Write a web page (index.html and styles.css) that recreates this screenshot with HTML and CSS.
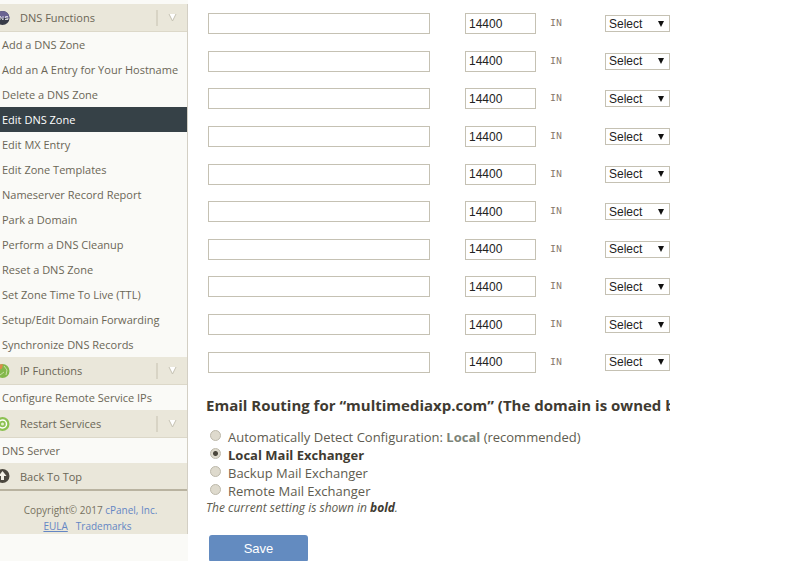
FILE: index.html
```html
<!DOCTYPE html>
<html lang="en">
<head>
  <meta charset="UTF-8" />
  <meta name="viewport" content="width=device-width, initial-scale=1.0"/>
  <title>Edit DNS Zone</title>
  <link rel="stylesheet" href="styles.css">
</head>
<body>
  <aside class="sidebar">
    <nav>
      <div class="nav-header">
        <svg class="nav-icon" width="10" height="16" viewBox="0 0 10 16">
          <circle cx="2.5" cy="8" r="7" fill="#373b48"/>
          <path d="M-4.5 8a7 7 0 0 1 14 0z" fill="#6a6492"/>
          <path d="M0 10V6l3 4V6M8 6.500H5.500V8H8v1.500H5" fill="none" stroke="#d4d3dc" stroke-width="1"/>
        </svg>
        <span>DNS Functions</span>
        <button type="button" class="toggle" aria-label="Collapse DNS Functions">
          <svg width="9" height="9" viewBox="0 0 9 9"><path d="M1 1l3.500 7L8 1" fill="#fff" stroke="#c5c2b2"/></svg>
        </button>
      </div>
      <ul class="nav-list">
        <li><a href="#">Add a DNS Zone</a></li>
        <li><a href="#">Add an A Entry for Your Hostname</a></li>
        <li><a href="#">Delete a DNS Zone</a></li>
        <li><a href="#" class="active">Edit DNS Zone</a></li>
        <li><a href="#">Edit MX Entry</a></li>
        <li><a href="#">Edit Zone Templates</a></li>
        <li><a href="#">Nameserver Record Report</a></li>
        <li><a href="#">Park a Domain</a></li>
        <li><a href="#">Perform a DNS Cleanup</a></li>
        <li><a href="#">Reset a DNS Zone</a></li>
        <li><a href="#">Set Zone Time To Live (TTL)</a></li>
        <li><a href="#">Setup/Edit Domain Forwarding</a></li>
        <li><a href="#">Synchronize DNS Records</a></li>
      </ul>
      <div class="nav-header">
        <svg class="nav-icon" width="10" height="16" viewBox="0 0 10 16">
          <circle cx="2.5" cy="8" r="7" fill="#83b84b"/>
          <path d="M0 1.500a7 7 0 0 1 3 0l-1 4-2 1z" fill="#dd8a4c"/>
          <path d="M4 3l3 4-1 5M0 12l4-3" fill="none" stroke="#c9dfa6"/>
        </svg>
        <span>IP Functions</span>
        <button type="button" class="toggle" aria-label="Collapse IP Functions">
          <svg width="9" height="9" viewBox="0 0 9 9"><path d="M1 1l3.500 7L8 1" fill="#fff" stroke="#c5c2b2"/></svg>
        </button>
      </div>
      <ul class="nav-list">
        <li><a href="#">Configure Remote Service IPs</a></li>
      </ul>
      <div class="nav-header">
        <svg class="nav-icon" width="10" height="16" viewBox="0 0 10 16">
          <circle cx="2.5" cy="8" r="7" fill="#8cc152"/>
          <circle cx="2.5" cy="8" r="4" fill="none" stroke="#fff" stroke-width="1.500"/>
          <circle cx="2.5" cy="8" r="1.500" fill="#e4f1d3"/>
        </svg>
        <span>Restart Services</span>
        <button type="button" class="toggle" aria-label="Collapse Restart Services">
          <svg width="9" height="9" viewBox="0 0 9 9"><path d="M1 1l3.500 7L8 1" fill="#fff" stroke="#c5c2b2"/></svg>
        </button>
      </div>
      <ul class="nav-list">
        <li><a href="#">DNS Server</a></li>
      </ul>
      <a href="#" class="nav-header back-top">
        <svg class="nav-icon" width="10" height="16" viewBox="0 0 10 16">
          <circle cx="2.5" cy="8" r="7" fill="#4b473e"/>
          <path d="M2.500 3l4 5H4v4H1V8h-2.500z" fill="#f3f0e6"/>
        </svg>
        <span>Back To Top</span>
      </a>
    </nav>
    <footer class="copyright">
      <div>Copyright© 2017 <a href="#">cPanel, Inc.</a></div>
      <div class="legal"><a href="#" class="eula">EULA</a><a href="#">Trademarks</a></div>
    </footer>
  </aside>

  <main class="content">
    <form>
      <table class="records">
        <tbody>
          <tr>
            <td class="col-name"><input type="text" aria-label="Name"></td>
            <td class="col-ttl"><input type="text" value="14400" aria-label="TTL"></td>
            <td class="col-class">IN</td>
            <td><select aria-label="Record type"><option>Select</option></select></td>
          </tr>
          <tr>
            <td class="col-name"><input type="text" aria-label="Name"></td>
            <td class="col-ttl"><input type="text" value="14400" aria-label="TTL"></td>
            <td class="col-class">IN</td>
            <td><select aria-label="Record type"><option>Select</option></select></td>
          </tr>
          <tr>
            <td class="col-name"><input type="text" aria-label="Name"></td>
            <td class="col-ttl"><input type="text" value="14400" aria-label="TTL"></td>
            <td class="col-class">IN</td>
            <td><select aria-label="Record type"><option>Select</option></select></td>
          </tr>
          <tr>
            <td class="col-name"><input type="text" aria-label="Name"></td>
            <td class="col-ttl"><input type="text" value="14400" aria-label="TTL"></td>
            <td class="col-class">IN</td>
            <td><select aria-label="Record type"><option>Select</option></select></td>
          </tr>
          <tr>
            <td class="col-name"><input type="text" aria-label="Name"></td>
            <td class="col-ttl"><input type="text" value="14400" aria-label="TTL"></td>
            <td class="col-class">IN</td>
            <td><select aria-label="Record type"><option>Select</option></select></td>
          </tr>
          <tr>
            <td class="col-name"><input type="text" aria-label="Name"></td>
            <td class="col-ttl"><input type="text" value="14400" aria-label="TTL"></td>
            <td class="col-class">IN</td>
            <td><select aria-label="Record type"><option>Select</option></select></td>
          </tr>
          <tr>
            <td class="col-name"><input type="text" aria-label="Name"></td>
            <td class="col-ttl"><input type="text" value="14400" aria-label="TTL"></td>
            <td class="col-class">IN</td>
            <td><select aria-label="Record type"><option>Select</option></select></td>
          </tr>
          <tr>
            <td class="col-name"><input type="text" aria-label="Name"></td>
            <td class="col-ttl"><input type="text" value="14400" aria-label="TTL"></td>
            <td class="col-class">IN</td>
            <td><select aria-label="Record type"><option>Select</option></select></td>
          </tr>
          <tr>
            <td class="col-name"><input type="text" aria-label="Name"></td>
            <td class="col-ttl"><input type="text" value="14400" aria-label="TTL"></td>
            <td class="col-class">IN</td>
            <td><select aria-label="Record type"><option>Select</option></select></td>
          </tr>
          <tr>
            <td class="col-name"><input type="text" aria-label="Name"></td>
            <td class="col-ttl"><input type="text" value="14400" aria-label="TTL"></td>
            <td class="col-class">IN</td>
            <td><select aria-label="Record type"><option>Select</option></select></td>
          </tr>
        </tbody>
      </table>

      <h3>Email Routing for “multimediaxp.com” (The domain is owned by</h3>

      <div class="routing">
        <div class="option">
          <input type="radio" name="mx" id="mx-auto">
          <label for="mx-auto">Automatically Detect Configuration: <b class="detected">Local</b> (recommended)</label>
        </div>
        <div class="option">
          <input type="radio" name="mx" id="mx-local" checked>
          <label for="mx-local"><b>Local Mail Exchanger</b></label>
        </div>
        <div class="option">
          <input type="radio" name="mx" id="mx-backup">
          <label for="mx-backup">Backup Mail Exchanger</label>
        </div>
        <div class="option">
          <input type="radio" name="mx" id="mx-remote">
          <label for="mx-remote">Remote Mail Exchanger</label>
        </div>
      </div>
      <p class="note">The current setting is shown in <b>bold</b>.</p>

      <button type="submit" class="btn-save">Save</button>
    </form>
  </main>
</body>
</html>
```

FILE: styles.css
```css
* {
  box-sizing: border-box;
}
body {
  margin: 0;
  height: 100vh;
  overflow: hidden;
  display: flex;
  background: #fff;
  color: #605c50;
  font-family: "Open Sans", sans-serif;
  font-size: 13px;
}
a {
  color: #6486c4;
  text-decoration: none;
}
b {
  color: #3f3b32;
}

/* sidebar */
.sidebar {
  flex: 0 0 188px;
  padding-top: 4px;
  background: #fafaf7;
  font-size: 11px;
}
nav {
  border-right: 1px solid #d3cfc4;
}
.nav-header {
  display: flex;
  align-items: center;
  height: 28px;
  background: #eae7da;
  border-bottom: 1px solid #dcd8c9;
  color: #6b6656;
}
.nav-icon {
  margin-right: 10px;
}
.toggle {
  display: flex;
  align-items: center;
  justify-content: center;
  width: 31px;
  height: 16px;
  margin-left: auto;
  padding: 0;
  background: none;
  border: none;
  border-left: 2px solid #d8d4c5;
}
.nav-list {
  list-style: none;
  margin: 0;
  padding: 0;
}
.nav-list a {
  display: block;
  padding-left: 2px;
  line-height: 25px;
  color: #6b6656;
}
.nav-list a.active {
  background: #364147;
  color: #fff;
}
.back-top {
  border-bottom: 2px solid #b9b3a0;
}
.copyright {
  padding: 11px 0 0;
  background: #eae7da;
  border-right: 1px solid #d3cfc4;
  color: #77725f;
  font-size: 10px;
  line-height: 16px;
  text-align: center;
}
.copyright div:first-child {
  padding-right: 6px;
}
.legal {
  display: flex;
  justify-content: center;
  gap: 8px;
  padding-right: 12px;
}
.eula {
  text-decoration: underline;
}

/* zone records */
.content {
  flex: 1;
  min-width: 0;
  padding: 5px 18px 0;
}
.records {
  height: 376px;
  border-collapse: collapse;
}
.records td {
  padding: 0 2px;
}
.records .col-name {
  padding-right: 33px;
}
.records .col-class {
  padding: 0 41px 0 12px;
  font-family: "Liberation Mono", monospace;
  font-size: 10px;
  color: #857668;
}
.records input,
.records select {
  display: block;
  border: 1px solid #c5c1b3;
  border-radius: 0;
  background-color: #fff;
  color: #222;
  font-family: "Liberation Sans", Arial, sans-serif;
  font-size: 12px;
}
.records input {
  height: 21px;
  padding: 0 3px;
}
.col-name input {
  width: 222px;
}
.col-ttl input {
  width: 71px;
}
.records select {
  width: 65px;
  height: 17px;
  padding: 0 3px;
  appearance: none;
  background-image: url("data:image/svg+xml,%3Csvg xmlns='http://www.w3.org/2000/svg' width='6' height='6'%3E%3Cpath d='M0 0h6L3 6z' fill='%23111'/%3E%3C/svg%3E");
  background-repeat: no-repeat;
  background-position: right 5px center;
}

/* email routing */
h3 {
  max-width: 464px;
  margin: 14px 0 13px;
  overflow: hidden;
  white-space: nowrap;
  color: #3f3b32;
  font-size: 15px;
  line-height: 20px;
}
.option {
  display: flex;
  line-height: 18px;
}
.option input {
  appearance: none;
  width: 11px;
  height: 11px;
  margin: 2px 7px 0 4px;
  border: 1px solid #bdb9ab;
  border-radius: 50%;
  background: #dedacd;
}
.option input:checked {
  background: radial-gradient(circle, #4a463c 2px, #dedacd 3px);
}
.option .detected {
  color: #7c8478;
}
.note {
  margin: 0 0 19px;
  font-size: 12px;
  font-style: italic;
  line-height: 16px;
}
.btn-save {
  width: 99px;
  height: 27px;
  margin-left: 3px;
  border: none;
  border-radius: 3px;
  background: #638bc0;
  color: #fff;
  font-family: "Liberation Sans", Arial, sans-serif;
  font-size: 13px;
}
```
